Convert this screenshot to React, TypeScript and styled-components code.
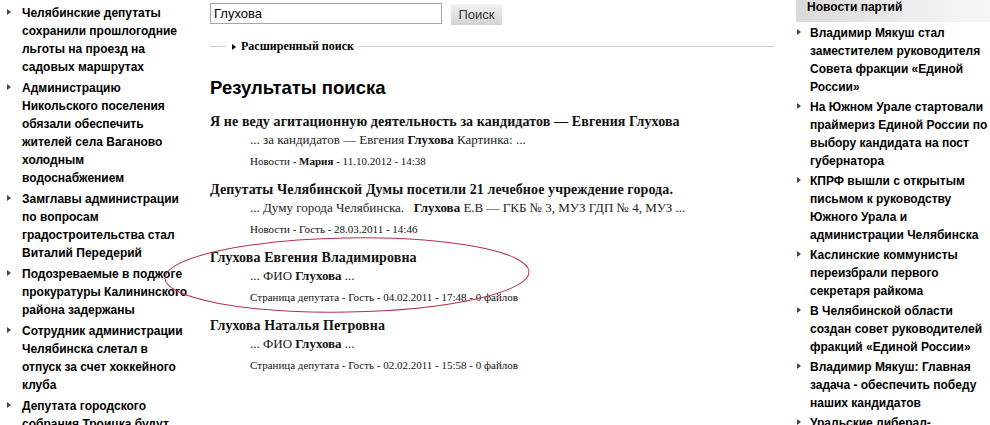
import React from 'react';
import styled, { createGlobalStyle } from 'styled-components';

const GlobalStyle = createGlobalStyle`
  html, body {
    margin: 0;
    padding: 0;
    background: #fff;
  }
  body {
    font-family: "Liberation Sans", Arial, sans-serif;
    color: #000;
  }
`;

const Page = styled.div`
  position: relative;
  display: grid;
  grid-template-columns: 210px 586px 194px;
  width: 990px;
  height: 425px;
  overflow: hidden;
`;

const SideColumn = styled.ul`
  list-style: none;
  margin: 0;
  padding: ${(p: { $top: number; $gap: number }) => p.$top}px 0 0 0;
  display: flex;
  flex-direction: column;
  gap: ${(p: { $top: number; $gap: number }) => p.$gap}px;
`;

const NewsItem = styled.li`
  display: flex;
  font-size: 12px;
  font-weight: bold;
  line-height: 18px;
  white-space: nowrap;
`;

const Bullet = styled.span`
  flex: 0 0 ${(p: { $w: number; $left: number }) => p.$w}px;
  padding-left: ${(p: { $w: number; $left: number }) => p.$left}px;
  box-sizing: border-box;
  &::before {
    content: '';
    display: inline-block;
    margin-top: 5px;
    border-top: 3.5px solid transparent;
    border-bottom: 3.5px solid transparent;
    border-left: 4px solid #3c4a48;
    vertical-align: top;
  }
`;

const Center = styled.div`
  padding-top: 3px;
`;

const SearchRow = styled.form`
  display: flex;
  align-items: flex-start;
  gap: 9px;
  margin: 0;
`;

const SearchInput = styled.input`
  width: 232px;
  height: 21px;
  box-sizing: border-box;
  border: 1px solid #a5a5a5;
  padding: 0 3px;
  font-family: "Liberation Sans", Arial, sans-serif;
  font-size: 13px;
  color: #000;
  outline: none;
`;

const SearchButton = styled.button`
  margin-top: 1px;
  width: 51px;
  height: 21px;
  border: none;
  background: linear-gradient(#f4f4f4, #d2d2d2);
  font-family: "Liberation Sans", Arial, sans-serif;
  font-size: 13px;
  color: #333;
  padding: 0;
`;

const Advanced = styled.fieldset`
  margin: 14px 0 0 0;
  width: 564px;
  padding: 0;
  border: none;
  border-top: 1px solid #cfcfcf;
  height: 0;
`;

const AdvancedLegend = styled.legend`
  margin-left: 16px;
  padding: 0 4px 0 6px;
  font-family: "Liberation Serif", "Times New Roman", serif;
  font-weight: bold;
  font-size: 12px;
  line-height: 14px;
  &::before {
    content: '';
    display: inline-block;
    border-top: 3.5px solid transparent;
    border-bottom: 3.5px solid transparent;
    border-left: 4px solid #000;
    margin-right: 5px;
    vertical-align: 0px;
  }
`;

const Heading = styled.h2`
  margin: 24px 0 14px 0;
  font-size: 18.5px;
  line-height: 22px;
  font-weight: bold;
`;

const Result = styled.div`
  margin-bottom: 13px;
  font-family: "Liberation Serif", "Times New Roman", serif;
  white-space: nowrap;
`;

const ResultTitle = styled.div`
  font-size: 14px;
  font-weight: bold;
  line-height: 18px;
  letter-spacing: 0.1px;
  color: #111;
`;

const Snippet = styled.div`
  margin-left: 40px;
  font-size: 13px;
  line-height: 18px;
  color: #222;
  b {
    font-weight: bold;
    color: #111;
  }
`;

const Meta = styled.div`
  margin: 5px 0 0 40px;
  font-size: 11px;
  line-height: 14px;
  color: #111;
`;

const Right = styled.div`
  display: flex;
  flex-direction: column;
`;

const RightHeader = styled.div`
  height: 22px;
  padding-left: 11px;
  font-size: 12px;
  font-weight: bold;
  line-height: 14px;
  background: linear-gradient(90deg, #d9d9d9, #eeeeee 60%, #f6f6f6);
`;

const Circle = styled.svg`
  position: absolute;
  left: 160px;
  top: 233px;
  pointer-events: none;
`;

const leftNews = [
  ['Челябинские депутаты', 'сохранили прошлогодние', 'льготы на проезд на', 'садовых маршрутах'],
  ['Администрацию', 'Никольского поселения', 'обязали обеспечить', 'жителей села Ваганово', 'холодным', 'водоснабжением'],
  ['Замглавы администрации', 'по вопросам', 'градостроительства стал', 'Виталий Передерий'],
  ['Подозреваемые в поджоге', 'прокуратуры Калининского', 'района задержаны'],
  ['Сотрудник администрации', 'Челябинска слетал в', 'отпуск за счет хоккейного', 'клуба'],
  ['Депутата городского', 'собрания Троицка будут'],
];

const rightNews = [
  ['Владимир Мякуш стал', 'заместителем руководителя', 'Совета фракции «Единой', 'России»'],
  ['На Южном Урале стартовали', 'праймериз Единой России по', 'выбору кандидата на пост', 'губернатора'],
  ['КПРФ вышли с открытым', 'письмом к руководству', 'Южного Урала и', 'администрации Челябинска'],
  ['Каслинские коммунисты', 'переизбрали первого', 'секретаря райкома'],
  ['В Челябинской области', 'создан совет руководителей', 'фракций «Единой России»'],
  ['Владимир Мякуш: Главная', 'задача - обеспечить победу', 'наших кандидатов'],
  ['Уральские либерал-'],
];

type ResultData = {
  title: string;
  snippet: React.ReactNode;
  meta: React.ReactNode;
};

const results: ResultData[] = [
  {
    title: 'Я не веду агитационную деятельность за кандидатов — Евгения Глухова',
    snippet: <>... за кандидатов — Евгения <b>Глухова</b> Картинка: ...</>,
    meta: <>Новости - <b>Мария</b> - 11.10.2012 - 14:38</>,
  },
  {
    title: 'Депутаты Челябинской Думы посетили 21 лечебное учреждение города.',
    snippet: <>... Думу города Челябинска. &nbsp; <b>Глухова</b> Е.В — ГКБ № 3, МУЗ ГДП № 4, МУЗ ...</>,
    meta: <>Новости - Гость - 28.03.2011 - 14:46</>,
  },
  {
    title: 'Глухова Евгения Владимировна',
    snippet: <>... ФИО <b>Глухова</b> ...</>,
    meta: <>Страница депутата - Гость - 04.02.2011 - 17:48 - 0 файлов</>,
  },
  {
    title: 'Глухова Наталья Петровна',
    snippet: <>... ФИО <b>Глухова</b> ...</>,
    meta: <>Страница депутата - Гость - 02.02.2011 - 15:58 - 0 файлов</>,
  },
];

type ListProps = { items: string[][]; top: number; gap: number; bw: number; bl: number };

const NewsList = ({ items, top, gap, bw, bl }: ListProps) => (
  <SideColumn $top={top} $gap={gap}>
    {items.map((lines, i) => (
      <NewsItem key={i}>
        <Bullet $w={bw} $left={bl} />
        <span>
          {lines.map((l, j) => (
            <React.Fragment key={j}>
              {j > 0 && <br />}
              {l}
            </React.Fragment>
          ))}
        </span>
      </NewsItem>
    ))}
  </SideColumn>
);

export default function App() {
  return (
    <>
      <GlobalStyle />
      <Page>
        <NewsList items={leftNews} top={4} gap={3} bw={22} bl={7} />
        <Center>
          <SearchRow onSubmit={(e) => e.preventDefault()}>
            <SearchInput defaultValue="Глухова" />
            <SearchButton type="submit">Поиск</SearchButton>
          </SearchRow>
          <Advanced>
            <AdvancedLegend>Расширенный поиск</AdvancedLegend>
          </Advanced>
          <Heading>Результаты поиска</Heading>
          {results.map((r, i) => (
            <Result key={i}>
              <ResultTitle>{r.title}</ResultTitle>
              <Snippet>{r.snippet}</Snippet>
              <Meta>{r.meta}</Meta>
            </Result>
          ))}
        </Center>
        <Right>
          <RightHeader>Новости партий</RightHeader>
          <NewsList items={rightNews} top={2} gap={2} bw={14} bl={1} />
        </Right>
        <Circle width="380" height="90" viewBox="0 0 380 90">
          <ellipse cx="187" cy="42" rx="182" ry="37" fill="none" stroke="#b3304a" strokeWidth="1" transform="rotate(-1 187 42)" />
        </Circle>
      </Page>
    </>
  );
}
